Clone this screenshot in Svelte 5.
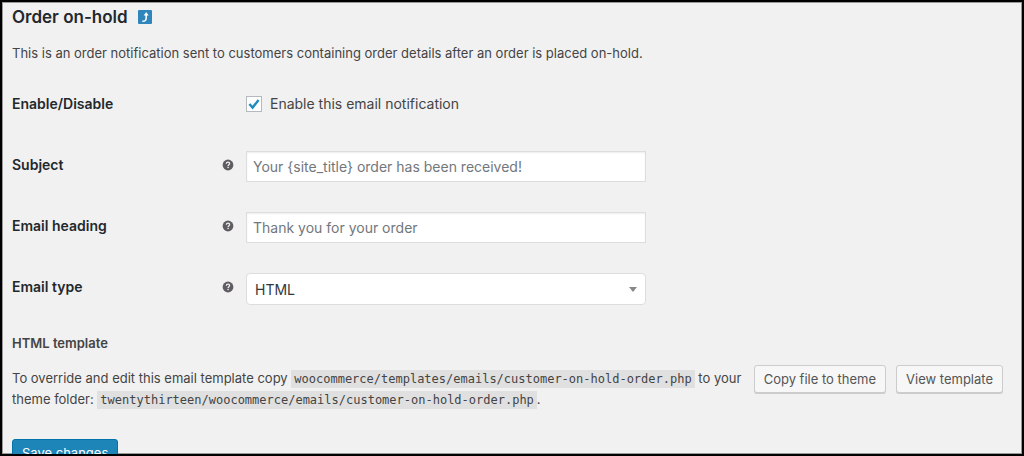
<script lang="ts">
  let enabled = $state(true);
  let subject = $state('');
  let heading = $state('');
  let emailType = $state('html');
</script>

{#snippet helpTip()}
  <svg class="help" viewBox="0 0 12 12" role="img" aria-label="Help">
    <circle cx="6" cy="6" r="5.4" fill="#5f5c62" />
    <path d="M4.3 4.7C4.4 2.5 7.7 2.6 7.6 4.6C7.6 5.7 6.1 5.7 6.1 7" fill="none" stroke="#f1f1f1" stroke-width="1.3" />
    <rect x="5.4" y="7.8" width="1.4" height="1.3" fill="#f1f1f1" />
  </svg>
{/snippet}

<main class="screen">
  <h2>
    Order on-hold
    <a class="back" href="#emails" aria-label="Return to emails">
      <svg viewBox="0 0 14 14">
        <rect width="14" height="14" rx="1" fill="#2f86bd" />
        <path d="M4.3 11.2C7.2 11.3 8.2 10.3 8.2 7.8V5" fill="none" stroke="#fff" stroke-width="1.5" />
        <path d="M8.2 2L10.7 5.4H5.7Z" fill="#fff" />
      </svg>
    </a>
  </h2>

  <p class="description">
    This is an order notification sent to customers containing order details after an order is placed on-hold.
  </p>

  <form onsubmit={(e) => e.preventDefault()}>
    <div class="row">
      <span class="title">Enable/Disable</span>
      <label class="check">
        <input type="checkbox" bind:checked={enabled} />
        Enable this email notification
      </label>
    </div>
    <div class="row">
      <div class="title"><label for="subject">Subject</label>{@render helpTip()}</div>
      <input id="subject" class="field" type="text" placeholder={'Your {site_title} order has been received!'} bind:value={subject} />
    </div>
    <div class="row">
      <div class="title"><label for="heading">Email heading</label>{@render helpTip()}</div>
      <input id="heading" class="field" type="text" placeholder="Thank you for your order" bind:value={heading} />
    </div>
    <div class="row">
      <div class="title"><label for="email-type">Email type</label>{@render helpTip()}</div>
      <div class="select">
        <select id="email-type" class="field" bind:value={emailType}>
          <option value="plain">Plain text</option>
          <option value="html">HTML</option>
          <option value="multipart">Multipart</option>
        </select>
        <svg class="arrow" viewBox="0 0 8 5"><path d="M0 0H8L4 5Z" fill="#888" /></svg>
      </div>
    </div>

    <h4>HTML template</h4>
    <div class="template">
      <p>
        To override and edit this email template copy
        <code>woocommerce/templates/emails/customer-on-hold-order.php</code> to your theme folder:
        <code>twentythirteen/woocommerce/emails/customer-on-hold-order.php</code>.
      </p>
      <div class="actions">
        <button type="button" class="button">Copy file to theme</button>
        <button type="button" class="button">View template</button>
      </div>
    </div>

    <button type="submit" class="button primary">Save changes</button>
  </form>
</main>

<style>
  .screen {
    box-sizing: border-box;
    height: 100vh;
    overflow: hidden;
    padding: 4px 19px 0 10px;
    border: 2px solid #000;
    box-shadow: inset 0 0 0 1px #999;
    background: #f1f1f1;
    color: #444;
    font-family: Inter, 'Open Sans', sans-serif;
    font-size: 13px;
    line-height: 20px;
  }

  h2 {
    display: flex;
    align-items: center;
    gap: 10px;
    margin: 0;
    color: #23282d;
    font-size: 17px;
    font-weight: 600;
    line-height: 22px;
  }

  .back {
    display: block;
    width: 14px;
    height: 14px;
  }

  .back svg {
    display: block;
  }

  .description {
    margin: 15px 0 11px;
  }

  .row {
    display: grid;
    grid-template-columns: 234px minmax(0, 400px);
    align-items: start;
    box-sizing: border-box;
    min-height: 61px;
    padding: 16px 0 14px;
  }

  .title {
    display: flex;
    align-items: center;
    justify-content: space-between;
    padding: 4px 12px 0 0;
    color: #23282d;
    font-size: 14px;
    font-weight: 600;
  }

  .help {
    width: 12px;
    height: 12px;
  }

  .check {
    display: flex;
    align-items: center;
    gap: 8px;
    padding-top: 4px;
    font-size: 14px;
  }

  .check input {
    appearance: none;
    width: 16px;
    height: 16px;
    margin: 0;
    border: 1px solid #b4b9be;
    background: #fff;
  }

  .check input:checked {
    background: #fff
      url("data:image/svg+xml,%3Csvg xmlns='http://www.w3.org/2000/svg' viewBox='0 0 14 14'%3E%3Cpath d='M2.4 7L5.6 10.6L11.6 3' fill='none' stroke='%231e8cbe' stroke-width='2.4'/%3E%3C/svg%3E");
  }

  .field {
    box-sizing: border-box;
    width: 100%;
    height: 31px;
    margin: 0;
    padding: 0 6px;
    border: 1px solid #ddd;
    border-radius: 0;
    background: #fff;
    box-shadow: inset 0 1px 2px rgba(0, 0, 0, 0.07);
    color: #32373c;
    font-family: inherit;
    font-size: 14px;
  }

  .field::placeholder {
    color: #72777c;
  }

  .select {
    position: relative;
  }

  select.field {
    display: block;
    height: 32px;
    padding: 0 8px;
    appearance: none;
    border-radius: 4px;
    box-shadow: none;
  }

  .arrow {
    position: absolute;
    top: 14px;
    right: 9px;
    width: 8px;
    height: 5px;
    pointer-events: none;
  }

  h4 {
    margin: 14px 0 12px;
    font-size: 13px;
    font-weight: 600;
  }

  .template {
    display: flex;
    justify-content: space-between;
    gap: 6px;
  }

  .template p {
    margin: 0;
    padding-top: 3px;
  }

  code {
    padding: 2px 3px;
    background: #e0e0e0;
    font-family: 'DejaVu Sans Mono', monospace;
    font-size: 12px;
  }

  .actions {
    display: flex;
    flex-shrink: 0;
    align-items: flex-start;
    gap: 10px;
  }

  .button {
    height: 28px;
    padding: 0 9px;
    border: 1px solid #ccc;
    border-radius: 3px;
    background: #f7f7f7;
    box-shadow: 0 1px 0 #ccc;
    color: #555;
    font-family: inherit;
    font-size: 13px;
    white-space: nowrap;
  }

  .primary {
    margin-top: 29px;
    border-color: #0073aa;
    background: #1e85b9;
    box-shadow: none;
    color: #fff;
  }
</style>
